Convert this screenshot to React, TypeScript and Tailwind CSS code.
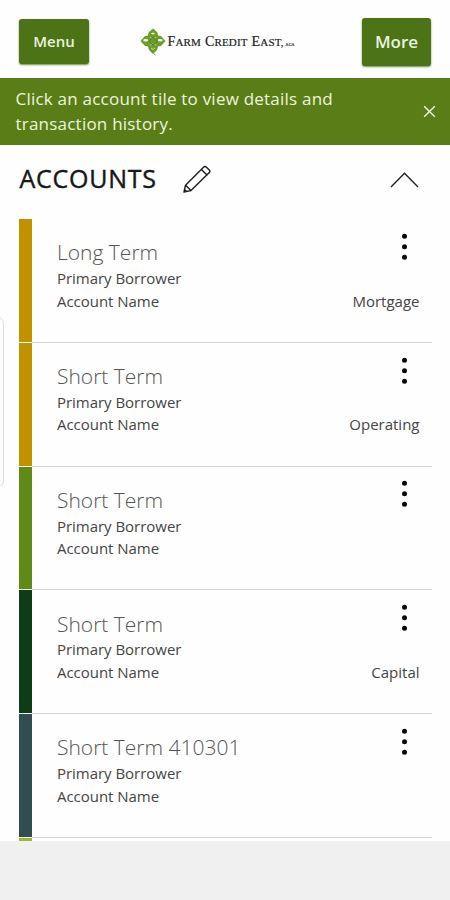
type Account = { name: string; kind?: string; bar: string };

const accounts: Account[] = [
  { name: "Long Term", kind: "Mortgage", bar: "bg-[#c09200]" },
  { name: "Short Term", kind: "Operating", bar: "bg-[#c09200]" },
  { name: "Short Term", bar: "bg-[#5e8a18]" },
  { name: "Short Term", kind: "Capital", bar: "bg-[#0c3d16]" },
  { name: "Short Term 410301", bar: "bg-[#304d4f]" },
];

function LogoMark() {
  return (
    <svg width="26" height="28" viewBox="0 0 26 28" fill="none">
      <path d="M13 .5 17.500 4.500 18 7.500 21 8 25.500 13 21 18 18 18.500 17 22 13 26 9 22 8 18.500 5 18 .5 13 5 8 8 7.500 8.500 4.500Z" fill="#6b9d2c" />
      <g fill="#f4f9e9">
        <ellipse cx="13" cy="5.600" rx="1.800" ry=".8" />
        <ellipse cx="5.700" cy="12.300" rx="2.500" ry="1.300" />
        <ellipse cx="20.300" cy="12.300" rx="2.500" ry="1.300" />
      </g>
      <path d="m10 9 2 2M16 9l-2 2M10 17.500l2-2M16 17.500l-2-2M11 20l2 1.500 2-1.500" stroke="#dcebc0" strokeWidth=".8" />
      <path d="m9 13.200 4-4 4 4-4 4Z" stroke="#4d7f18" strokeWidth="1" />
      <path d="m13.500 25.500 2 1.500" stroke="#6b9d2c" />
    </svg>
  );
}

function Logo() {
  return (
    <div className="-ml-[4px] mr-[12px] flex items-center">
      <LogoMark />
      <div className="ml-[1px] flex items-baseline whitespace-nowrap pt-[3px] font-['Liberation_Serif',serif] text-[11px] leading-4 tracking-[0.15px] text-[#222] [-webkit-text-stroke:0.2px_#222]">
        <span className="text-[14px]">F</span>ARM
        <span className="ml-[4px] text-[14px]">C</span>REDIT
        <span className="ml-[4px] text-[14px]">E</span>AST,
        <span className="ml-[2px] text-[4px]">ACA</span>
      </div>
    </div>
  );
}

function Row({ account }: { account: Account }) {
  return (
    <li className="flex h-[123.75px] shrink-0">
      <div className={`mb-px w-[13px] ${account.bar}`} />
      <div className="flex flex-1 justify-between border-b-[1.5px] border-[#d3d3d3] pl-[25px] pr-[12.5px]">
        <div className="pt-[19.25px] text-[15px] leading-[22.5px] tracking-[-0.03px] text-[#454545]">
          <h2 className="-mb-[0.75px] text-[21px] font-light leading-[29.5px] tracking-normal text-[#555]">{account.name}</h2>
          <p>Primary Borrower</p>
          <p>Account Name</p>
        </div>
        <div className="flex flex-col items-end text-[15px] leading-[22.5px] text-[#454545]">
          <svg className="mr-[11.5px] mt-[12.75px]" width="7" height="30" viewBox="0 0 7 30" fill="#080808">
            <circle cx="3.5" cy="4.2" r="2.5" />
            <circle cx="3.5" cy="14.7" r="2.5" />
            <circle cx="3.5" cy="25.2" r="2.5" />
          </svg>
          {account.kind && <p className="mt-[27.75px]">{account.kind}</p>}
        </div>
      </div>
    </li>
  );
}

export default function App() {
  return (
    <div className="relative flex h-[900px] w-[450px] flex-col overflow-hidden bg-[#f0f0f0] font-['Open_Sans','Noto_Sans',sans-serif]">
      <div className="flex h-[841px] flex-col overflow-hidden bg-[#fefefe]">
        <header className="flex h-[78px] shrink-0 items-center justify-between pl-[19px] pr-[19px] pt-[5px]">
          <button className="h-[45px] w-[70px] rounded-[3px] bg-[#4c7315] text-[15px] font-semibold text-[#e9f3df] shadow-[0_1px_2px_#6b8f4c]">Menu</button>
          <Logo />
          <button className="h-[48px] w-[69px] rounded-[3px] bg-[#4c7315] text-[17px] font-semibold text-[#e9f3df] shadow-[0_1px_2px_#6b8f4c]">More</button>
        </header>
        <div className="flex h-[67px] shrink-0 items-center justify-between bg-[#5a7d17] pl-[15.5px] pr-[14px]">
          <p className="whitespace-nowrap pb-[2px] text-[17px] leading-[25px] tracking-[0.22px] text-[#edf5df]">
            Click an account tile to view details and
            <br />
            transaction history.
          </p>
          <svg width="13" height="13" viewBox="0 0 13 13" stroke="#f3f8e9" strokeWidth="1.4">
            <path d="m1.2 1.2 10.6 10.6M11.8 1.2 1.2 11.8" />
          </svg>
        </div>
        <div className="flex h-[74px] shrink-0 items-center pb-[5px] pl-[19.5px] pr-[31px]">
          <h1 className="w-[162.5px] whitespace-nowrap pb-[1px] text-[25px] tracking-[0.75px] text-[#171717] [-webkit-text-stroke:0.4px_#171717]">ACCOUNTS</h1>
          <svg width="29" height="29" viewBox="0 0 29 29" fill="none" stroke="#1c1c1c" strokeWidth="1.4" strokeLinejoin="round" strokeLinecap="round">
            <path d="M2 27 3.5 20.2 21.5 2.2Q23 .8 24.5 2.2L27.3 5Q28.5 6.2 27.3 7.6L9 25.6ZM3.5 20.2 9 25.6M19.4 4.4 25 10M2.5 24.5 4.8 26.6" />
          </svg>
          <svg className="ml-auto" width="29" height="16" viewBox="0 0 29 16" fill="none" stroke="#222" strokeWidth="1.4">
            <path d="M1 15 14.5 1.3 28 15" />
          </svg>
        </div>
        <ul className="flex flex-col pl-[19px] pr-[18px]">
          {accounts.map((account, i) => (
            <Row key={i} account={account} />
          ))}
          <li className="h-[4px] w-[13px] bg-[#9ab82b]" />
        </ul>
      </div>
      <div className="absolute -left-[10px] top-[317px] h-[170px] w-[14px] rounded-[6px] border-[1.5px] border-[#dedede]" />
    </div>
  );
}
